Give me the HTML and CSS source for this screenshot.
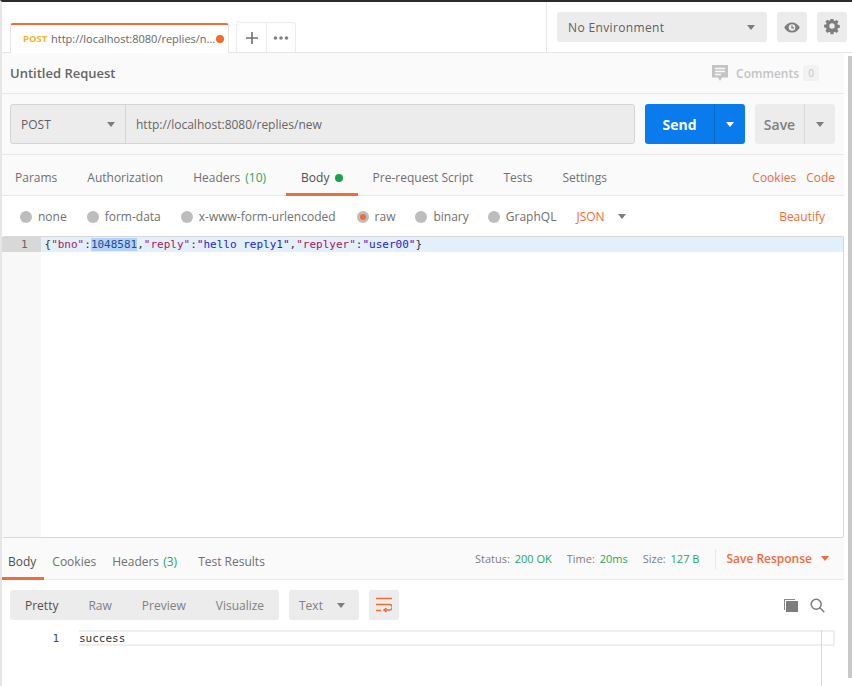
FILE: index.html
```html
<!DOCTYPE html>
<html lang="en">
<head>
<meta charset="utf-8">
<title>Untitled Request</title>
<link rel="stylesheet" href="styles.css">
</head>
<body>
<div class="app">
  <header class="topbar">
    <div class="tabstrip">
      <div class="reqtab">
        <span class="reqtab-method">POST</span>
        <span class="reqtab-url">http://localhost:8080/replies/n...</span>
        <span class="dot-orange"></span>
      </div>
      <div class="tabbtn tabbtn-plus">
        <svg width="14" height="14" viewBox="0 0 14 14"><path d="M7 1v12M1 7h12" stroke="#707070" stroke-width="1.6" fill="none"/></svg>
      </div>
      <div class="tabbtn tabbtn-more">
        <svg width="16" height="4" viewBox="0 0 16 4"><circle cx="2.5" cy="2" r="1.8" fill="#808080"/><circle cx="8" cy="2" r="1.8" fill="#808080"/><circle cx="13.5" cy="2" r="1.8" fill="#808080"/></svg>
      </div>
    </div>
    <div class="envbar">
      <div class="envselect"><span>No Environment</span><i class="caret"></i></div>
      <div class="iconbtn">
        <svg width="16" height="11" viewBox="0 0 16 11"><path d="M8 .5C4.6.5 1.8 2.5.2 5.5c1.6 3 4.4 5 7.8 5s6.200-2 7.800-5C14.200 2.500 11.400.5 8 .5z" fill="#7d7d7d"/><circle cx="8" cy="5.500" r="3.300" fill="#ececec"/><path d="M8 3.500v2.300h2" stroke="#7d7d7d" stroke-width="1.300" fill="none"/></svg>
      </div>
      <div class="iconbtn">
        <svg width="16" height="16" viewBox="0 0 16 16"><path fill-rule="evenodd" d="M6.500 0h3l.4 2.200 1.300.6 1.900-1.300 2.100 2.100-1.300 1.900.6 1.300 2.200.4v3l-2.200.4-.6 1.300 1.300 1.900-2.100 2.100-1.900-1.300-1.300.6-.4 2.200h-3l-.4-2.200-1.300-.6-1.900 1.300L.7 13.500 2 11.600l-.6-1.300L-.8 9.900v-3l2.200-.4.6-1.300L.7 3.300l2.100-2.100 1.900 1.300 1.300-.6zM8 5.200a3 3 0 1 0 0 6 3 3 0 0 0 0-6z" transform="translate(.8 -.4) scale(.9)" fill="#7d7d7d"/></svg>
      </div>
    </div>
  </header>

  <div class="workspace">
    <main class="content">
      <section class="titlerow">
        <h1 class="reqtitle">Untitled Request</h1>
        <div class="comments">
          <svg width="16" height="16" viewBox="0 0 16 16"><path d="M0 0h16v12.500h-6L8 16l-2-3.500H0z" fill="#c4c4c4"/><path d="M3 3.500h10M3 6.500h10M3 9.500h6" stroke="#fafafa" stroke-width="1.400"/></svg>
          <span class="comments-label">Comments</span>
          <span class="comments-count">0</span>
        </div>
      </section>

      <section class="urlrow">
        <div class="urlbox">
          <div class="method"><span>POST</span><i class="caret"></i></div>
          <div class="urlinput">http://localhost:8080/replies/new</div>
        </div>
        <div class="send"><span class="send-label">Send</span><span class="send-drop"><i class="caret caret-white"></i></span></div>
        <div class="save"><span class="save-label">Save</span><span class="save-drop"><i class="caret"></i></span></div>
      </section>

      <nav class="reqtabs">
        <span class="rt rt-params">Params</span>
        <span class="rt">Authorization</span>
        <span class="rt">Headers <em class="ok">(10)</em></span>
        <span class="rt rt-active">Body <b class="dot-green"></b></span>
        <span class="rt">Pre-request Script</span>
        <span class="rt">Tests</span>
        <span class="rt">Settings</span>
        <span class="rt-links"><span>Cookies</span><span>Code</span></span>
      </nav>

      <div class="bodyopts">
        <label class="opt"><i class="radio"></i>none</label>
        <label class="opt"><i class="radio"></i>form-data</label>
        <label class="opt opt-wide"><i class="radio"></i>x-www-form-urlencoded</label>
        <label class="opt"><i class="radio radio-on"></i>raw</label>
        <label class="opt opt-tight"><i class="radio"></i>binary</label>
        <label class="opt"><i class="radio"></i>GraphQL</label>
        <span class="jsonpick">JSON<i class="caret"></i></span>
        <span class="beautify">Beautify</span>
      </div>

      <div class="editor">
        <div class="gutter"><div class="gutter-active">1</div></div>
        <div class="lines">
          <div class="codeline"><span class="pl">{</span><span class="key">"bno"</span><span class="pl">:</span><span class="sel">1048581</span><span class="pl">,</span><span class="key">"reply"</span><span class="pl">:</span><span class="str">"hello reply1"</span><span class="pl">,</span><span class="key">"replyer"</span><span class="pl">:</span><span class="str">"user00"</span><span class="pl">}</span></div>
        </div>
      </div>

      <nav class="restabs">
        <div class="restabs-left">
          <span class="rs rs-active">Body</span>
          <span class="rs">Cookies</span>
          <span class="rs rs-headers">Headers <em class="ok">(3)</em></span>
          <span class="rs">Test Results</span>
        </div>
        <div class="resmeta">
          <span class="meta">Status: <em class="ok">200 OK</em></span>
          <span class="meta">Time: <em class="ok">20ms</em></span>
          <span class="meta meta-last">Size: <em class="ok">127 B</em></span>
          <span class="saveresp">Save Response<i class="caret caret-orange"></i></span>
        </div>
      </nav>

      <div class="rescontrols">
        <div class="viewseg">
          <span class="seg seg-on">Pretty</span><span class="seg">Raw</span><span class="seg">Preview</span><span class="seg">Visualize</span>
        </div>
        <div class="fmt"><span>Text</span><i class="caret"></i></div>
        <div class="wrap">
          <svg width="16" height="16" viewBox="0 0 16 16" fill="none" stroke="#f26b3a" stroke-width="1.500"><path d="M0 1.500h16M0 7.500h13.500a2 2 0 0 1 0 5.500H8.500M0 13.500h5"/><path d="M10.500 11 8 13l2.500 2" /></svg>
        </div>
        <div class="restools">
          <svg width="14" height="14" viewBox="0 0 14 14"><path d="M0 1h11v1H1v10H0z" fill="#8a8a8a"/><path d="M2 3h12v11H2z" fill="#7d7d7d"/></svg>
          <svg width="15" height="15" viewBox="0 0 15 15" fill="none" stroke="#7d7d7d" stroke-width="1.500"><circle cx="6.200" cy="6.200" r="5"/><path d="m9.800 9.800 4.500 4.500"/></svg>
        </div>
      </div>

      <div class="output">
        <div class="outnum">1</div>
        <div class="outline">success</div>
        <div class="minimap"></div>
      </div>
    </main>
    <aside class="scrollbar"></aside>
  </div>
</div>
</body>
</html>
```
FILE: styles.css
```css
* { box-sizing: border-box; }
html, body { margin: 0; height: 100%; overflow: hidden; }
body { background: #fff; font-family: "Open Sans", sans-serif; font-size: 12px; color: #6a6a6a; }
em { font-style: normal; }
i { display: block; }

.app { width: 852px; height: 686px; display: flex; flex-direction: column; border-top: 2px solid #2a2a2a; border-left: 2px solid #e6e6e6; }

.caret { width: 0; height: 0; border-left: 4px solid transparent; border-right: 4px solid transparent; border-top: 5px solid #7d7d7d; }
.caret-white { border-top-color: #fff; }
.caret-orange { border-top-color: #f26b3a; }
.ok { color: #26a65b; }

/* top bar */
.topbar { height: 51px; flex: none; display: flex; border-bottom: 1px solid #e6e6e6; }
.tabstrip { width: 545px; display: flex; align-items: flex-end; padding-left: 8px; border-right: 1px solid #e6e6e6; }
.reqtab { width: 219px; height: 30px; margin-bottom: -1px; background: #fff; border: 1px solid #e6e6e6; border-top: 2px solid #f26b3a; border-bottom: 0; border-radius: 3px 3px 0 0; display: flex; align-items: center; padding: 0 4px 2px 12px; position: relative; }
.reqtab-method { font-size: 9.5px; font-weight: 700; color: #f5b32a; width: 28px; }
.reqtab-url { font-size: 11px; color: #666; white-space: nowrap; }
.dot-orange { position: absolute; right: 4px; top: 10px; width: 8px; height: 8px; border-radius: 50%; background: #f26b2a; }
.tabbtn { height: 30px; display: flex; align-items: center; justify-content: center; background: #fff; border: 1px solid #ececec; border-bottom: 0; }
.tabbtn-plus { width: 31px; margin-left: 7px; border-radius: 3px 0 0 0; }
.tabbtn-more { width: 29px; border-left: 0; border-radius: 0 3px 0 0; }
.envbar { flex: 1; display: flex; align-items: flex-start; padding: 10px 0 0 10px; gap: 10px; }
.envselect { width: 210px; height: 30px; background: #ececec; border-radius: 3px; display: flex; align-items: center; justify-content: space-between; padding: 0 12px 0 11px; color: #606060; letter-spacing: .03em; }
.iconbtn { width: 30px; height: 30px; background: #ececec; border-radius: 3px; display: flex; align-items: center; justify-content: center; }

/* workspace */
.workspace { flex: 1; display: flex; min-height: 0; }
.content { width: 842px; flex: none; display: flex; flex-direction: column; }
.scrollbar { width: 4px; margin: 3px 0 8px 4px; background: #c9c9c9; }

.titlerow { height: 41px; flex: none; background: #fafafa; border-bottom: 1px solid #e8e8e8; display: flex; align-items: center; justify-content: space-between; padding: 0 25px 0 8px; }
.reqtitle { margin: 0; font-size: 13px; font-weight: 600; color: #666; }
.comments { display: flex; align-items: center; color: #c4c4c4; font-weight: 600; font-size: 12px; }
.comments-label { margin-left: 8px; }
.comments-count { margin-left: 4px; width: 16px; height: 16px; background: #f2f2f2; border-radius: 2px; font-size: 10px; text-align: center; line-height: 16px; font-weight: 400; }

.urlrow { height: 61px; flex: none; background: #fafafa; border-bottom: 1px solid #e8e8e8; display: flex; align-items: flex-start; padding: 10px 0 0 8px; }
.urlbox { width: 625px; height: 40px; background: #ececec; border: 1px solid #d4d4d4; border-radius: 3px; display: flex; }
.method { width: 115px; flex: none; border-right: 1px solid #d4d4d4; display: flex; align-items: center; justify-content: space-between; padding: 0 10px 0 10px; color: #606060; }
.urlinput { flex: 1; display: flex; align-items: center; padding-left: 10px; color: #666; }
.send { width: 100px; height: 40px; margin-left: 10px; background: #097bed; border-radius: 3px; display: flex; color: #fff; font-weight: 700; font-size: 14px; }
.send-label { width: 70px; display: flex; align-items: center; justify-content: center; border-right: 1px solid #0868c8; }
.send-drop { flex: 1; display: flex; align-items: center; justify-content: center; }
.save { width: 80px; height: 40px; margin-left: 10px; background: #ececec; border-radius: 3px; display: flex; color: #808080; font-weight: 600; font-size: 14px; }
.save-label { width: 50px; display: flex; align-items: center; justify-content: center; border-right: 1px solid #d8d8d8; }
.save-drop { flex: 1; display: flex; align-items: center; justify-content: center; }

.reqtabs { height: 41px; flex: none; background: #fafafa; border-bottom: 1px solid #e8e8e8; display: flex; padding-left: 3px; }
.rt { display: flex; align-items: center; gap: 2px; padding: 4px 10px 0; margin-right: 10px; color: #707070; white-space: pre; height: 41px; }
.rt-active { color: #505050; border-bottom: 3px solid #f26b3a; padding: 7px 15px 0; margin-right: 5px; }
.dot-green { width: 8px; height: 8px; border-radius: 50%; background: #16a34a; display: block; }
.rt-links { margin-left: auto; display: flex; gap: 10px; align-items: center; padding: 4px 9px 0 0; color: #f26b3a; }

.bodyopts { height: 40px; flex: none; display: flex; align-items: center; padding: 1px 0 0 18px; color: #707070; }
.opt { display: flex; align-items: center; gap: 6px; margin-right: 20px; }
.opt-wide { margin-right: 21px; }
.opt-tight { margin-right: 19px; }
.radio { width: 12px; height: 12px; border-radius: 50%; background: #bdbdbd; }
.radio-on { background: #f26b3a; border: 3px solid #bdbdbd; }
.jsonpick { display: flex; align-items: center; gap: 13px; color: #f26b3a; }
.beautify { margin-left: auto; padding-right: 19px; color: #f26b3a; }

.editor { height: 302px; flex: none; display: flex; border: 1px solid #d8d8d8; border-left: 0; border-radius: 2px; font-family: "DejaVu Sans Mono", monospace; font-size: 11px; }
.gutter { width: 39px; flex: none; background: #f8f8f8; }
.gutter-active { height: 15px; line-height: 15px; background: #d8d8d8; color: #666; padding-left: 19px; }
.lines { flex: 1; }
.codeline { height: 15px; line-height: 15px; background: #e4effc; padding-left: 3.5px; white-space: pre; }
.pl { color: #333; }
.key { color: #a31a5c; }
.str { color: #2222dd; }
.sel { color: #1a4c99; background: #b4d2f8; }

.restabs { height: 42px; flex: none; background: #fafafa; border-bottom: 1px solid #e8e8e8; display: flex; justify-content: space-between; }
.restabs-left { display: flex; }
.rs { display: flex; align-items: center; padding: 5px 0 0; margin-right: 16px; color: #707070; white-space: pre; height: 42px; }
.rs .ok { margin-left: 1px; }
.rs-headers { margin-right: 21px; }
.rs-active { color: #505050; padding: 8px 8px 0 6px; margin-right: 8px; border-bottom: 3px solid #f26b3a; }
.resmeta { display: flex; align-items: center; font-size: 11px; color: #808080; padding-right: 15px; }
.meta { margin-right: 15px; white-space: pre; }
.meta-last { margin-right: 16px; }
.meta .ok { margin-left: 2px; }
.saveresp { display: flex; align-items: center; gap: 9px; height: 20px; padding: 0 0 0 10px; border-left: 1px solid #e8e8e8; color: #f26b3a; font-size: 12px; font-weight: 600; }

.rescontrols { height: 50px; flex: none; display: flex; align-items: flex-start; padding: 10px 0 0 8px; }
.viewseg { height: 30px; width: 269px; background: #ececec; border-radius: 3px; display: flex; align-items: center; padding-left: 15px; color: #808080; }
.seg { margin-right: 30px; }
.seg-on { color: #505050; }
.fmt { width: 70px; height: 30px; margin-left: 10px; background: #ececec; border-radius: 3px; display: flex; align-items: center; justify-content: space-between; padding: 0 14px 0 10px; color: #808080; }
.wrap { width: 30px; height: 30px; margin-left: 10px; background: #ececec; border-radius: 3px; display: flex; align-items: center; justify-content: center; }
.restools { margin-left: auto; display: flex; gap: 12px; align-items: center; height: 30px; padding-right: 19px; }

.output { flex: 1; display: flex; position: relative; font-family: "DejaVu Sans Mono", monospace; font-size: 11px; }
.outnum { width: 77px; flex: none; text-align: right; padding: 3px 20px 0 0; color: #3a4a8c; line-height: 12px; }
.outline { width: 756px; height: 16px; border: 2px solid #efefef; border-left: 0; line-height: 14px; color: #333; }
.minimap { position: absolute; top: 0; right: 22px; bottom: 0; width: 1px; background: #d8d8d8; }
```
